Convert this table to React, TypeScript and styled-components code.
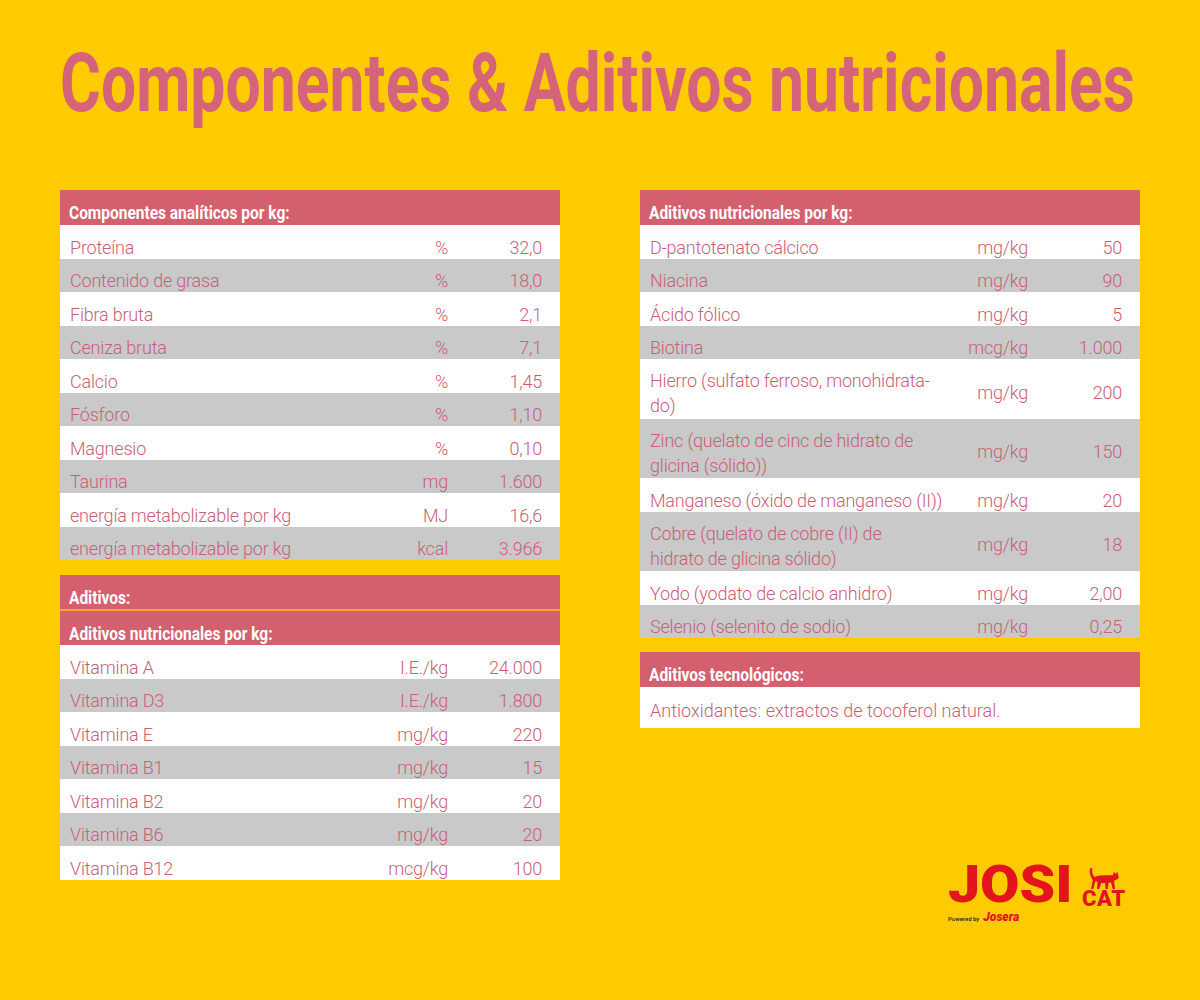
import React from "react";
import styled, { createGlobalStyle } from "styled-components";

const GlobalStyle = createGlobalStyle`
  html, body { margin: 0; padding: 0; }
  body {
    background: #fecb00;
    font-family: Roboto, "Liberation Sans", sans-serif;
    overflow: hidden;
  }
`;

const Page = styled.div`
  width: 1200px;
  height: 1000px;
  box-sizing: border-box;
  padding: 35px 60px 0 60px;
  background: #fecb00;
  position: relative;
  overflow: hidden;
`;

const Title = styled.h1`
  margin: 0;
  height: 96px;
  font-family: Roboto, "Liberation Sans", sans-serif;
  font-weight: 700;
  font-size: 82px;
  line-height: 96px;
  color: #d5637a;
  white-space: nowrap;
  overflow: visible;
  span {
    display: inline-block;
    transform: scaleX(0.762);
    transform-origin: left center;
  }
`;

const Columns = styled.div`
  margin-top: 59px;
  display: grid;
  grid-template-columns: 500px 500px;
  column-gap: 80px;
  align-items: start;
`;

const Column = styled.div`
  display: flex;
  flex-direction: column;
`;

const Table = styled.div<{ $gap?: number }>`
  display: flex;
  flex-direction: column;
  margin-top: ${(p) => p.$gap || 0}px;
`;

const Header = styled.div<{ $h: number; $line?: boolean }>`
  height: ${(p) => p.$h}px;
  box-sizing: border-box;
  background: #d4606f;
  color: #fff;
  padding: ${(p) => p.$h * 0.37}px 0 0 9px;
  font-weight: 700;
  font-size: 18px;
  line-height: 20px;
  white-space: nowrap;
  border-bottom: ${(p) => (p.$line ? "2px solid #f2a33a" : "none")};
  span {
    display: inline-block;
    transform: scaleX(0.86);
    transform-origin: left center;
  }
`;

const Row = styled.div<{ $gray?: boolean; $tall?: boolean }>`
  height: ${(p) => (p.$tall ? 59.5 : 33.5)}px;
  box-sizing: border-box;
  background: ${(p) => (p.$gray ? "#c9c9c9" : "#ffffff")};
  color: #c8607a;
  display: grid;
  grid-template-columns: 1fr auto 94px;
  align-items: ${(p) => (p.$tall ? "center" : "start")};
  padding: ${(p) => (p.$tall ? "0 18px 0 10px" : "12.5px 18px 0 10px")};
  font-size: 18px;
  font-weight: 300;
  line-height: 20px;
  letter-spacing: -0.2px;
  white-space: nowrap;
`;

const Label = styled.div<{ $tall?: boolean }>`
  line-height: ${(p) => (p.$tall ? "25px" : "20px")};
  padding-top: ${(p) => (p.$tall ? "9px" : "0")};
`;

const Unit = styled.div<{ $tall?: boolean }>`
  text-align: right;
  padding-top: ${(p) => (p.$tall ? "8px" : "0")};
`;

const Value = styled(Unit)``;

const NoteRow = styled.div`
  height: 41px;
  box-sizing: border-box;
  background: #fff;
  color: #c8607a;
  padding: 14px 0 0 10px;
  font-size: 18px;
  font-weight: 300;
  line-height: 20px;
  letter-spacing: 0px;
  white-space: nowrap;
`;

const Logo = styled.div`
  position: absolute;
  left: 948px;
  top: 862px;
  display: flex;
  flex-direction: column;
  color: #e2141c;
`;

const LogoTop = styled.div`
  display: flex;
  align-items: flex-start;
`;

const Josi = styled.div`
  width: 128px;
  height: 46px;
  font-family: Roboto, "Liberation Sans", sans-serif;
  font-weight: 900;
  font-size: 51px;
  line-height: 46px;
  letter-spacing: 0px;
  span {
    display: inline-block;
    transform: scaleX(1.12);
    transform-origin: left center;
  }
`;

const CatBox = styled.div`
  display: flex;
  flex-direction: column;
  align-items: center;
  margin-left: 6px;
  margin-top: 5px;
`;

const CatWord = styled.div`
  font-family: Roboto, "Liberation Sans", sans-serif;
  font-weight: 900;
  font-size: 22px;
  line-height: 18px;
  letter-spacing: 0.5px;
`;

const Powered = styled.div`
  display: flex;
  align-items: baseline;
  gap: 4px;
  margin-top: 2px;
`;

const PoweredText = styled.span`
  font-family: Roboto, sans-serif;
  font-size: 6px;
  color: #222;
  font-weight: 500;
`;

const Josera = styled.span`
  font-family: Roboto, sans-serif;
  font-style: italic;
  font-weight: 900;
  font-size: 12px;
  color: #e2141c;
`;

type R = { l: React.ReactNode; u: string; v: string; tall?: boolean };

const analiticos: R[] = [
  { l: "Proteína", u: "%", v: "32,0" },
  { l: "Contenido de grasa", u: "%", v: "18,0" },
  { l: "Fibra bruta", u: "%", v: "2,1" },
  { l: "Ceniza bruta", u: "%", v: "7,1" },
  { l: "Calcio", u: "%", v: "1,45" },
  { l: "Fósforo", u: "%", v: "1,10" },
  { l: "Magnesio", u: "%", v: "0,10" },
  { l: "Taurina", u: "mg", v: "1.600" },
  { l: "energía metabolizable por kg", u: "MJ", v: "16,6" },
  { l: "energía metabolizable por kg", u: "kcal", v: "3.966" },
];

const vitaminas: R[] = [
  { l: "Vitamina A", u: "I.E./kg", v: "24.000" },
  { l: "Vitamina D3", u: "I.E./kg", v: "1.800" },
  { l: "Vitamina E", u: "mg/kg", v: "220" },
  { l: "Vitamina B1", u: "mg/kg", v: "15" },
  { l: "Vitamina B2", u: "mg/kg", v: "20" },
  { l: "Vitamina B6", u: "mg/kg", v: "20" },
  { l: "Vitamina B12", u: "mcg/kg", v: "100" },
];

const minerales: R[] = [
  { l: "D-pantotenato cálcico", u: "mg/kg", v: "50" },
  { l: "Niacina", u: "mg/kg", v: "90" },
  { l: "Ácido fólico", u: "mg/kg", v: "5" },
  { l: "Biotina", u: "mcg/kg", v: "1.000" },
  {
    l: (
      <>
        Hierro (sulfato ferroso, monohidrata-
        <br />
        do)
      </>
    ),
    u: "mg/kg",
    v: "200",
    tall: true,
  },
  {
    l: (
      <>
        Zinc (quelato de cinc de hidrato de
        <br />
        glicina (sólido))
      </>
    ),
    u: "mg/kg",
    v: "150",
    tall: true,
  },
  { l: "Manganeso (óxido de manganeso (II))", u: "mg/kg", v: "20" },
  {
    l: (
      <>
        Cobre (quelato de cobre (II) de
        <br />
        hidrato de glicina sólido)
      </>
    ),
    u: "mg/kg",
    v: "18",
    tall: true,
  },
  { l: "Yodo (yodato de calcio anhidro)", u: "mg/kg", v: "2,00" },
  { l: "Selenio (selenito de sodio)", u: "mg/kg", v: "0,25" },
];

function Rows({ rows }: { rows: R[] }) {
  return (
    <>
      {rows.map((r, i) => (
        <Row key={i} $gray={i % 2 === 1} $tall={r.tall}>
          <Label $tall={r.tall}>{r.l}</Label>
          <Unit $tall={r.tall}>{r.u}</Unit>
          <Value $tall={r.tall}>{r.v}</Value>
        </Row>
      ))}
    </>
  );
}

function Cat() {
  return (
    <svg width="32" height="23" viewBox="0 0 30 22" fill="#e2141c">
      <path d="M6 9.5 C10 7.5 18 7.8 23.5 8 L24.5 4.5 L26.2 6.8 L27.8 4.3 L28.6 8 C29.8 9.6 28.8 12 26.6 12.3 L24.6 13.2 L25.6 21 L23.4 21 L21.6 14.6 L19.4 15.2 L18.6 21 L16.5 21 L16 15.4 L12.4 15.4 L10.4 21 L8.3 21 L8.8 14.4 L6.8 13.4 L4.8 21 L2.7 21 L4.2 12.4 C2.6 9.6 0.6 6 1.6 2 C2 0.6 3.8 0.6 3.9 1.8 C3.3 5.2 4.4 8.2 6 9.5 Z" />
    </svg>
  );
}

export default function App() {
  return (
    <Page>
      <GlobalStyle />
      <Title>
        <span>Componentes &amp; Aditivos nutricionales</span>
      </Title>
      <Columns>
        <Column>
          <Table>
            <Header $h={35}>
              <span>Componentes analíticos por kg:</span>
            </Header>
            <Rows rows={analiticos} />
          </Table>
          <Table $gap={15}>
            <Header $h={36} $line>
              <span>Aditivos:</span>
            </Header>
            <Header $h={34}>
              <span>Aditivos nutricionales por kg:</span>
            </Header>
            <Rows rows={vitaminas} />
          </Table>
        </Column>
        <Column>
          <Table>
            <Header $h={35}>
              <span>Aditivos nutricionales por kg:</span>
            </Header>
            <Rows rows={minerales} />
          </Table>
          <Table $gap={14}>
            <Header $h={35}>
              <span>Aditivos tecnológicos:</span>
            </Header>
            <NoteRow>Antioxidantes: extractos de tocoferol natural.</NoteRow>
          </Table>
        </Column>
      </Columns>
      <Logo>
        <LogoTop>
          <Josi>
            <span>JOSI</span>
          </Josi>
          <CatBox>
            <Cat />
            <CatWord>CAT</CatWord>
          </CatBox>
        </LogoTop>
        <Powered>
          <PoweredText>Powered by</PoweredText>
          <Josera>Josera</Josera>
        </Powered>
      </Logo>
    </Page>
  );
}
